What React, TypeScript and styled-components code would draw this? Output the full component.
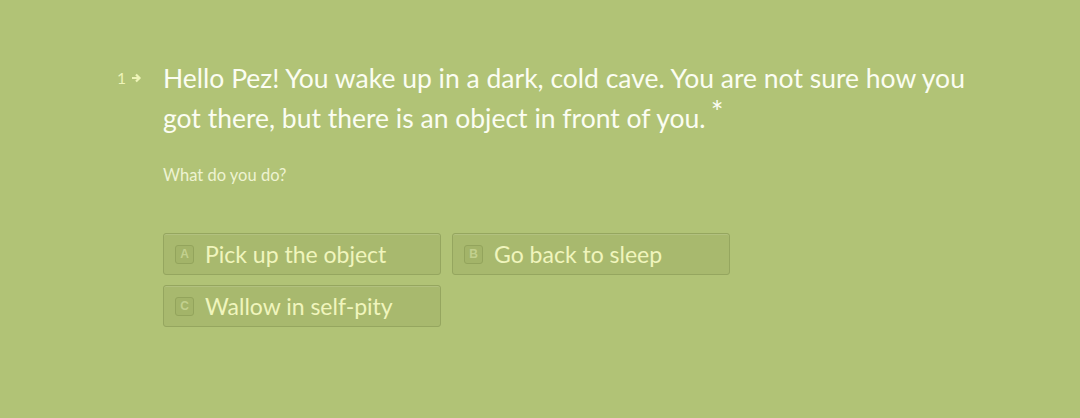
import styled, { createGlobalStyle } from "styled-components";

const GlobalStyle = createGlobalStyle`
  html, body {
    margin: 0;
    padding: 0;
    background: #b1c376;
  }
  body {
    font-family: Lato, "Noto Sans", sans-serif;
  }
`;

const Page = styled.div`
  height: 418px;
  box-sizing: border-box;
  padding: 58px 0 0 117px;
`;

const Question = styled.div`
  display: flex;
  align-items: flex-start;
`;

const Counter = styled.div`
  width: 46px;
  display: flex;
  align-items: center;
  gap: 5px;
  padding-top: 12px;
  color: #eef4b8;
  font-size: 15.5px;
  line-height: 16px;
`;

const Body = styled.div`
  flex: 1;
  max-width: 830px;
`;

const Title = styled.h1`
  margin: 0;
  color: #fbfdf2;
  font-weight: 400;
  font-size: 26.5px;
  line-height: 40px;
`;

const Required = styled.span`
  display: inline-block;
  font-size: 30px;
  line-height: 26px;
  margin-left: 5px;
  vertical-align: top;
`;

const Description = styled.p`
  margin: 27px 0 0;
  color: #eef3d2;
  font-size: 16.5px;
`;

const Choices = styled.div`
  margin-top: 48px;
  display: grid;
  grid-template-columns: repeat(2, 278px);
  gap: 10px 11px;
`;

const Choice = styled.button`
  display: flex;
  align-items: center;
  gap: 11px;
  height: 42px;
  box-sizing: border-box;
  padding: 0 11px;
  background: #a8b96e;
  border: 1px solid #95a65f;
  border-radius: 3px;
  box-shadow: inset 0 1px 0 rgba(255, 255, 255, 0.12);
  color: #f0f5bd;
  font-family: inherit;
  font-size: 23px;
  text-align: left;
  cursor: pointer;
`;

const Key = styled.span`
  width: 19px;
  height: 19px;
  box-sizing: border-box;
  display: inline-flex;
  align-items: center;
  justify-content: center;
  border: 1px solid #93a45c;
  border-radius: 3px;
  background: #a3b469;
  color: #c2d08e;
  font-family: "Liberation Sans", sans-serif;
  font-weight: 700;
  font-size: 12px;
`;

const choices = [
  { key: "A", label: "Pick up the object" },
  { key: "B", label: "Go back to sleep" },
  { key: "C", label: "Wallow in self-pity" },
];

export default function App() {
  return (
    <>
      <GlobalStyle />
      <Page>
        <Question>
          <Counter>
            <span>1</span>
            <svg width="11" height="10" viewBox="0 0 11 10">
              <path
                d="M1 5h7.5M5 1.5 8.5 5 5 8.5"
                stroke="#eef4b8"
                strokeWidth="2.2"
                fill="none"
              />
            </svg>
          </Counter>
          <Body>
            <Title>
              Hello Pez! You wake up in a dark, cold cave. You are not sure how
              you got there, but there is an object in front of you.
              <Required>*</Required>
            </Title>
            <Description>What do you do?</Description>
            <Choices>
              {choices.map((c) => (
                <Choice key={c.key}>
                  <Key>{c.key}</Key>
                  {c.label}
                </Choice>
              ))}
            </Choices>
          </Body>
        </Question>
      </Page>
    </>
  );
}
